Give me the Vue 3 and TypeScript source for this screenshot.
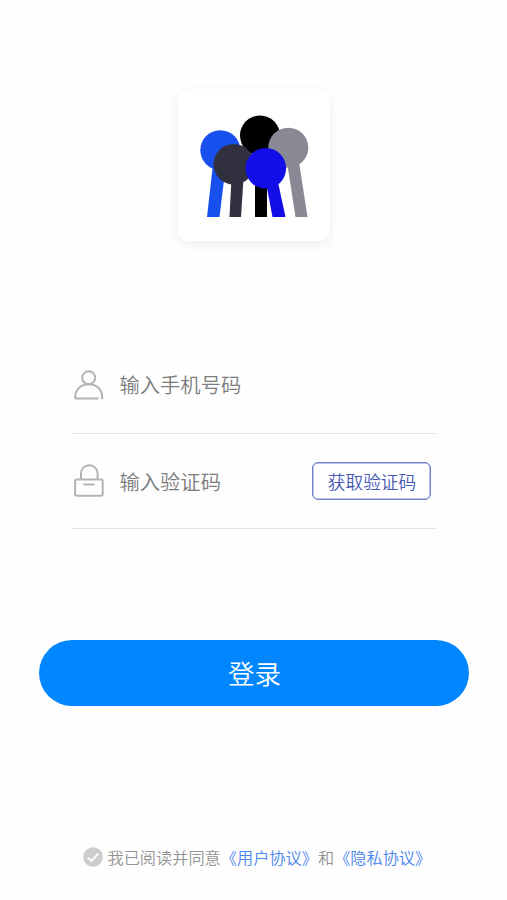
<script setup lang="ts">
import { ref } from 'vue'

const phone = ref('')
const code = ref('')
const agreed = ref(false)
</script>

<template>
  <main class="login">
    <div class="logo-card">
      <svg viewBox="178 89 152 152" aria-hidden="true">
        <path d="M255 150h12v67h-12z" fill="#000" />
        <circle cx="260" cy="135.500" r="20" fill="#000" />
        <path d="M287 162h12l8.500 55h-12z" fill="#898895" />
        <circle cx="288.300" cy="147.700" r="20" fill="#898895" />
        <path d="M213 164h13l-6.500 53h-12.500z" fill="#1850ee" />
        <circle cx="220.300" cy="150.200" r="20" fill="#1850ee" />
        <path d="M231.500 178h12l-2.500 39h-11.500z" fill="#30303f" />
        <circle cx="233.800" cy="164.300" r="20.300" fill="#30303f" />
        <path d="M265.500 180h12l8 37h-13z" fill="#130de8" />
        <circle cx="265.800" cy="168.300" r="20.300" fill="#130de8" />
      </svg>
    </div>

    <form class="fields" @submit.prevent>
      <label class="field phone-field">
        <svg class="icon" viewBox="0 0 32 32" aria-hidden="true">
          <circle cx="16.700" cy="8.700" r="6.500" />
          <path d="M30.200 29.600V28C30.200 20.300 24.200 15.200 16.700 15.200S3.200 20.300 3.200 28V28.400Q3.200 29.400 4.200 29.400H25.800" />
        </svg>
        <input v-model="phone" type="tel" placeholder="输入手机号码" />
      </label>
      <div class="field code-field">
        <svg class="icon" viewBox="0 0 32 32" aria-hidden="true">
          <rect x="3.100" y="14.500" width="27.600" height="16.300" rx="1.800" />
          <path d="M9 14V8.500A8.300 8.300 0 0 1 25.600 8.500V14M12 19.400H21.800" />
        </svg>
        <input v-model="code" type="text" placeholder="输入验证码" />
        <button class="get-code" type="button">获取验证码</button>
      </div>
    </form>

    <button class="submit" type="button">登录</button>

    <div class="agreement">
      <svg class="check" viewBox="0 0 20 20" aria-hidden="true" @click="agreed = !agreed">
        <circle cx="10" cy="10" r="9.800" fill="#cdcdcd" />
        <path d="M4.800 10.500L8.400 14L15.300 6.700" fill="none" stroke="#fff" stroke-width="1.900" />
      </svg>
      <span>我已阅读并同意<a>《用户协议》</a>和<a>《隐私协议》</a></span>
    </div>
  </main>
</template>

<style>
body {
  margin: 0;
  background: #fefefe;
}
</style>

<style scoped>
.login {
  box-sizing: border-box;
  width: 100%;
  height: 900px;
  padding-top: 89px;
  display: flex;
  flex-direction: column;
  align-items: center;
  overflow: hidden;
  background: #fefefe;
  font-family: "Noto Sans CJK SC", sans-serif;
  font-weight: 350;
}

.logo-card {
  flex: none;
  width: 152px;
  height: 152px;
  border-radius: 10px;
  background: #fff;
  box-shadow: 0 3px 12px rgba(0, 0, 0, 0.07);
}

.logo-card svg {
  display: block;
  width: 152px;
  height: 152px;
}

.fields {
  width: 364px;
  margin-top: 97px;
}

.field {
  box-sizing: border-box;
  display: flex;
  align-items: center;
  height: 95px;
  border-bottom: 1px solid #e2e2e2;
}

.phone-field {
  height: 96px;
  padding-bottom: 1px;
}

.icon {
  flex: none;
  width: 32px;
  height: 32px;
  margin-right: 16px;
  overflow: visible;
  fill: none;
  stroke: #b3b3b3;
  stroke-width: 2;
  stroke-linecap: round;
}

input {
  flex: 1;
  min-width: 0;
  height: 40px;
  padding: 0;
  border: 0;
  outline: 0;
  background: transparent;
  color: #555;
  font: inherit;
  font-size: 20.3px;
}

.phone-field input {
  padding-bottom: 3px;
}

input::placeholder {
  color: #7c7c7c;
  opacity: 1;
}

button {
  padding: 0;
  font: inherit;
  cursor: pointer;
}

.get-code {
  box-sizing: border-box;
  width: 119px;
  height: 38px;
  margin-right: 5px;
  padding-left: 2px;
  border: 1px solid #6f80ca;
  border-radius: 6px;
  background: #fff;
  box-shadow: inset 0 0 0 0.5px #8290d2;
  color: #4659b4;
  font-size: 17.7px;
}

.submit {
  flex: none;
  width: 430px;
  height: 66px;
  margin-top: 111px;
  padding: 0 0 2px 2px;
  border: 0;
  border-radius: 33px;
  background: #0086ff;
  color: #fff;
  font-size: 26.5px;
}

.agreement {
  display: flex;
  align-items: center;
  width: 342px;
  margin-top: 139px;
  color: #949494;
  font-size: 16.2px;
  line-height: 24px;
  white-space: nowrap;
}

.check {
  flex: none;
  width: 20px;
  height: 20px;
  margin-right: 5px;
}

.agreement a {
  color: #4a86f0;
}
</style>
